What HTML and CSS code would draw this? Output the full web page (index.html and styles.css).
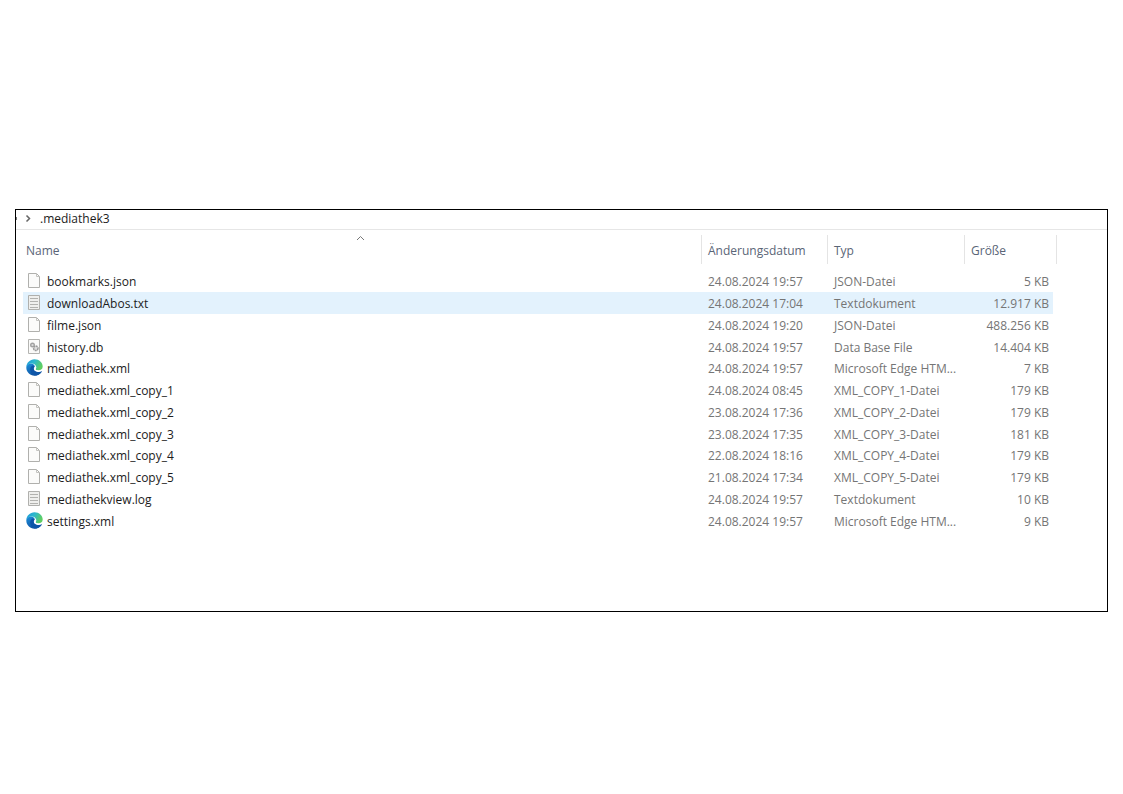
FILE: index.html
```html
<!DOCTYPE html>
<html lang="de">
<head>
<meta charset="utf-8">
<title>.mediathek3</title>
<link rel="stylesheet" href="styles.css">
</head>
<body>
<svg class="defs" aria-hidden="true">
  <defs>
    <linearGradient id="edge-blue" x1="0" y1="0" x2="0.6" y2="1">
      <stop offset="0" stop-color="#1c8fdc"/><stop offset="1" stop-color="#0f4f9e"/>
    </linearGradient>
    <linearGradient id="edge-green" x1="0" y1="0" x2="1" y2="0.4">
      <stop offset="0" stop-color="#1c97dc"/><stop offset="0.5" stop-color="#2cb8cc"/><stop offset="1" stop-color="#5fcf62"/>
    </linearGradient>
    <symbol id="file" viewBox="0 0 17 17">
      <path d="M2.500 1.500h8l3 3v11h-11z" fill="#fbfbfa" stroke="#b0b0ad"/>
      <path d="M10.500 1.500v3h3" fill="none" stroke="#c4c4c1"/>
    </symbol>
    <symbol id="text" viewBox="0 0 17 17">
      <path d="M2.500 1.500h11v14h-11z" fill="#efefed" stroke="#b0b0ad"/>
      <path d="M4 4.500h8M4 7.500h8M4 10.500h8M4 13.500h8" stroke="#b2b2af"/>
    </symbol>
    <symbol id="database" viewBox="0 0 17 17">
      <path d="M2.500 1.500h11v14h-11z" fill="#fafaf9" stroke="#b4b4b1"/>
      <circle cx="6.500" cy="7" r="1.800" fill="#ddd" stroke="#a2a2a2" stroke-width="1.400"/>
      <circle cx="9.800" cy="10.300" r="2.200" fill="#ddd" stroke="#999" stroke-width="1.500" stroke-dasharray="1.800 .5"/>
    </symbol>
    <symbol id="edge" viewBox="0 0 17 17">
      <path d="M.3 8.500C.3 13 4 16.700 8.500 16.700c3 0 5.600-1.500 7-3.700.3-.5-.1-.8-.6-.6-2.700 1.100-5.900.2-6.800-1.700-.6-1.200 0-2.200.5-2.800.5-1.900-1.700-3.300-4-3.300C2.200 4.600.3 6.400.3 8.500z" fill="url(#edge-blue)"/>
      <path d="M6.600 6.400c-2.200 1-3 3.600-2 6 .9 2.400 3 4 5.500 4.100 2.200-.3 4.200-1.600 5.400-3.500.3-.5-.1-.8-.6-.6-2.700 1.100-5.900.2-6.800-1.700-.6-1.200 0-2.200.5-2.800 0-.7-.7-1.400-2-1.500z" fill="#0e56a8"/>
      <path d="M.3 8.500C.3 3.900 4 .3 8.500.3c4.800 0 8.200 3.500 8.200 7.100 0 2.500-1.900 4-4.200 4-1.900 0-2.900-.7-2.900-1.200 0-.4.600-.8.600-1.900C10.200 6.300 8.100 4.600 5.500 4.600c-2.700 0-4.800 1.700-5.200 3.900z" fill="url(#edge-green)"/>
      <path d="M8.600 7.900c.6-.3 1.200-.4 1.600-.1.100 1.500-.6 2-.6 2.400 0 .5 1 1.200 2.900 1.200 1.300 0 2.500-.5 3.300-1.300-.2 1-.5 1.700-.9 2.300-2.700 1.100-5.900.2-6.800-1.700-.6-1.200 0-2.200.5-2.800z" fill="#fff"/>
    </symbol>
  </defs>
</svg>
<main class="window">
  <nav class="path" aria-label="Pfad">
    <span class="path-stub"></span>
    <svg class="path-arrow" viewBox="0 0 7 9" aria-hidden="true"><path d="M1.500 1.500l3 3-3 3"/></svg>
    <button class="path-item" type="button">.mediathek3</button>
  </nav>
  <table class="files">
    <thead>
      <tr>
        <th class="name" scope="col" aria-sort="ascending"><svg class="sort" viewBox="0 0 9 6" aria-hidden="true"><path d="M1 5l3.500-3.500L8 5"/></svg><button type="button">Name</button></th>
        <th class="date" scope="col"><button type="button">Änderungsdatum</button></th>
        <th class="type" scope="col"><button type="button">Typ</button></th>
        <th class="size" scope="col"><button type="button">Größe</button></th>
      </tr>
    </thead>
    <tbody>
      <tr><td><div class="entry"><svg class="icon"><use href="#file"/></svg>bookmarks.json</div></td><td>24.08.2024 19:57</td><td>JSON-Datei</td><td>5 KB</td></tr>
      <tr class="hover"><td><div class="entry"><svg class="icon"><use href="#text"/></svg>downloadAbos.txt</div></td><td>24.08.2024 17:04</td><td>Textdokument</td><td>12.917 KB</td></tr>
      <tr><td><div class="entry"><svg class="icon"><use href="#file"/></svg>filme.json</div></td><td>24.08.2024 19:20</td><td>JSON-Datei</td><td>488.256 KB</td></tr>
      <tr><td><div class="entry"><svg class="icon"><use href="#database"/></svg>history.db</div></td><td>24.08.2024 19:57</td><td>Data Base File</td><td>14.404 KB</td></tr>
      <tr><td><div class="entry"><svg class="icon"><use href="#edge"/></svg>mediathek.xml</div></td><td>24.08.2024 19:57</td><td>Microsoft Edge HTM...</td><td>7 KB</td></tr>
      <tr><td><div class="entry"><svg class="icon"><use href="#file"/></svg>mediathek.xml_copy_1</div></td><td>24.08.2024 08:45</td><td>XML_COPY_1-Datei</td><td>179 KB</td></tr>
      <tr><td><div class="entry"><svg class="icon"><use href="#file"/></svg>mediathek.xml_copy_2</div></td><td>23.08.2024 17:36</td><td>XML_COPY_2-Datei</td><td>179 KB</td></tr>
      <tr><td><div class="entry"><svg class="icon"><use href="#file"/></svg>mediathek.xml_copy_3</div></td><td>23.08.2024 17:35</td><td>XML_COPY_3-Datei</td><td>181 KB</td></tr>
      <tr><td><div class="entry"><svg class="icon"><use href="#file"/></svg>mediathek.xml_copy_4</div></td><td>22.08.2024 18:16</td><td>XML_COPY_4-Datei</td><td>179 KB</td></tr>
      <tr><td><div class="entry"><svg class="icon"><use href="#file"/></svg>mediathek.xml_copy_5</div></td><td>21.08.2024 17:34</td><td>XML_COPY_5-Datei</td><td>179 KB</td></tr>
      <tr><td><div class="entry"><svg class="icon"><use href="#text"/></svg>mediathekview.log</div></td><td>24.08.2024 19:57</td><td>Textdokument</td><td>10 KB</td></tr>
      <tr><td><div class="entry"><svg class="icon"><use href="#edge"/></svg>settings.xml</div></td><td>24.08.2024 19:57</td><td>Microsoft Edge HTM...</td><td>9 KB</td></tr>
    </tbody>
  </table>
</main>
</body>
</html>
```
FILE: styles.css
```css
* { box-sizing: border-box; }
body {
  margin: 0;
  padding: 209px 15px 80px;
  background: #fff;
  color: #1c1c1c;
  font: 12px/18px "Open Sans", "Noto Sans", sans-serif;
}
.defs { position: absolute; width: 0; height: 0; }
button {
  padding: 0;
  border: 0;
  background: none;
  color: inherit;
  font: inherit;
}
.window {
  border: 1px solid #000;
  padding-bottom: 80px;
}
.path {
  display: flex;
  align-items: center;
  height: 20px;
  padding-bottom: 2px;
  border-bottom: 1px solid #e6e6e6;
}
.path-stub { width: 1px; height: 3px; background: #777; }
.path-arrow {
  width: 7px;
  height: 9px;
  margin: 0 8px;
  fill: none;
  stroke: #666;
  stroke-width: 1.5;
}
.path-item { line-height: 16px; }
.files {
  width: calc(100% - 57px);
  margin: 5px 0 0 7px;
  border-spacing: 0;
  table-layout: fixed;
}
th {
  position: relative;
  height: 29px;
  padding: 2px 0 0 6px;
  border-right: 1px solid #e4e4e4;
  color: #5a6577;
  font-weight: 400;
  text-align: left;
}
th.name { padding-left: 3px; }
.date { width: 126px; }
.type { width: 137px; }
.size { width: 92px; }
.sort {
  position: absolute;
  top: 0;
  left: 50%;
  width: 9px;
  height: 6px;
  margin-left: -6px;
  fill: none;
  stroke: #777;
}
tbody::before { content: ""; display: table-row; height: 6px; }
td {
  height: 22px;
  padding: 2px 0 0 6px;
  color: #757575;
  white-space: nowrap;
}
/* Every fourth row is a pixel shorter, for an average pitch just under 22px. */
tbody tr:nth-child(4n) td { height: 21px; }
td:first-child { padding-left: 3px; color: #1c1c1c; }
td:last-child {
  padding-right: 4px;
  border-right: 4px solid transparent;
  background-clip: padding-box;
  text-align: right;
}
.entry { display: flex; align-items: center; gap: 4px; height: 18px; }
.icon { width: 17px; height: 17px; margin-bottom: 3px; }
.hover td { background-color: #e3f2fd; }
```
